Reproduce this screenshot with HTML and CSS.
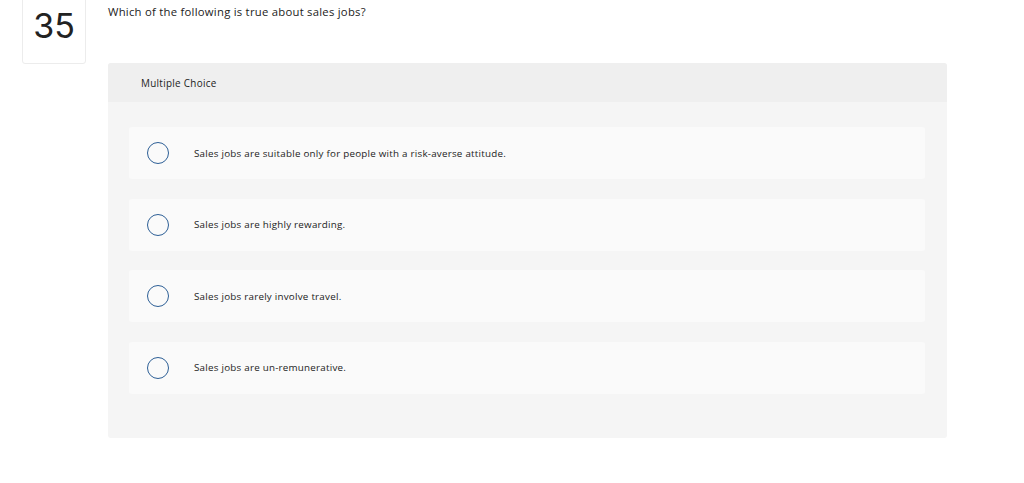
FILE: index.html
```html
<!DOCTYPE html>
<html lang="en">
<head>
<meta charset="utf-8">
<title>Question 35</title>
<link rel="stylesheet" href="styles.css">
</head>
<body>
<div class="question">
  <div class="num-box"><span class="num">35</span></div>
  <div class="content">
    <p class="prompt">Which of the following is true about sales jobs?</p>
    <div class="panel">
      <div class="panel-head">Multiple Choice</div>
      <div class="panel-body">
        <div class="option"><span class="radio"></span><span class="label">Sales jobs are suitable only for people with a risk-averse attitude.</span></div>
        <div class="option"><span class="radio"></span><span class="label">Sales jobs are highly rewarding.</span></div>
        <div class="option"><span class="radio"></span><span class="label">Sales jobs rarely involve travel.</span></div>
        <div class="option"><span class="radio"></span><span class="label">Sales jobs are un-remunerative.</span></div>
      </div>
    </div>
  </div>
</div>
</body>
</html>
```
FILE: styles.css
```css
html, body {
  margin: 0;
  padding: 0;
  background: #ffffff;
}
body {
  font-family: "Open Sans", "Liberation Sans", sans-serif;
  color: #333333;
}
.question {
  display: flex;
  align-items: flex-start;
  padding-left: 22px;
}
.num-box {
  width: 64px;
  height: 68px;
  margin-top: -4px;
  border: 1px solid #ececec;
  border-radius: 3px;
  box-sizing: border-box;
  display: flex;
  justify-content: center;
  padding-top: 9px;
}
.num {
  font-family: "Inter", "Open Sans", sans-serif;
  font-size: 34px;
  line-height: 40px;
  color: #222;
  font-weight: 400;
}
.content {
  margin-left: 22px;
  width: 839px;
}
.prompt {
  margin: 0;
  padding-top: 5px;
  font-size: 11.3px;
  letter-spacing: 0.25px;
  line-height: 14px;
  height: 63px;
  box-sizing: border-box;
  color: #222;
}
.panel {
  background: #f5f5f5;
  border-radius: 3px;
  overflow: hidden;
}
.panel-head {
  background: #efefef;
  height: 39px;
  display: flex;
  align-items: center;
  padding-left: 33px;
  font-size: 9.9px;
  letter-spacing: 0.3px;
  color: #222;
}
.panel-body {
  padding: 25px 22px 44px 21px;
  display: flex;
  flex-direction: column;
  gap: 19.5px;
}
.option {
  background: #fafafa;
  border-radius: 3px;
  height: 52px;
  display: flex;
  align-items: center;
  padding-left: 18px;
}
.radio {
  width: 22px;
  height: 22px;
  border: 1.2px solid #2d5f96;
  border-radius: 50%;
  box-sizing: border-box;
  flex: none;
}
.label {
  margin-left: 25px;
  font-size: 9.8px;
  letter-spacing: 0.24px;
  color: #222;
}
```
